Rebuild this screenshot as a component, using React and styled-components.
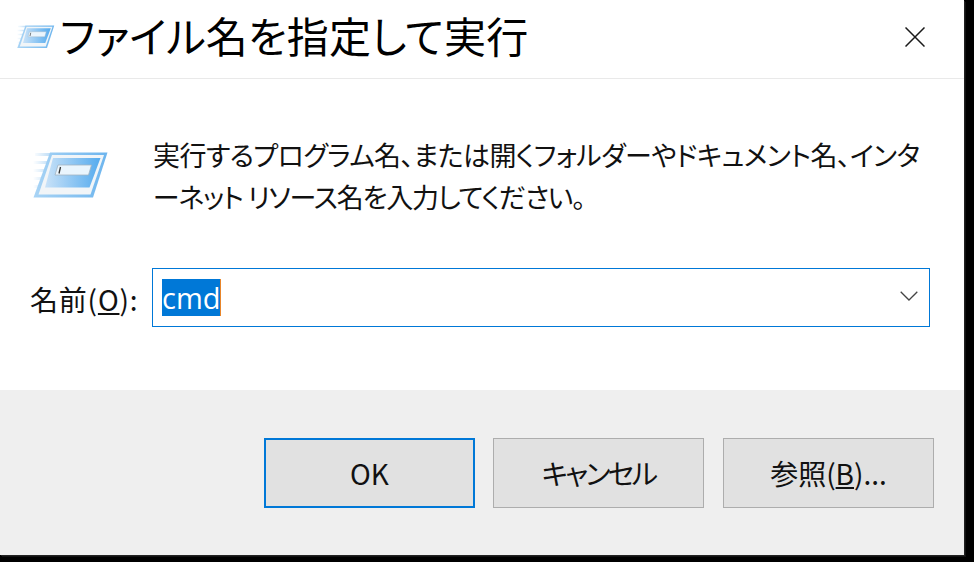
import React from "react";
import styled, { createGlobalStyle } from "styled-components";

const GlobalStyle = createGlobalStyle`
  html, body {
    margin: 0;
    padding: 0;
    background: #000;
  }
  body {
    width: 974px;
    height: 562px;
    overflow: hidden;
    font-family: "Noto Sans CJK JP", "Open Sans", sans-serif;
  }
`;

const RunIcon = ({ id, width, height }) => (
  <svg width={width} height={height} viewBox="0 0 76 47">
    <defs>
      <linearGradient id={`${id}-frame`} x1="0" x2="1" y1="0" y2="0">
        <stop offset="0" stopColor="#a9d4f5" />
        <stop offset="1" stopColor="#6db5ee" />
      </linearGradient>
      <linearGradient id={`${id}-inner`} x1="0" x2="1" y1="0" y2="0">
        <stop offset="0" stopColor="#c9e2f8" />
        <stop offset="1" stopColor="#55abee" />
      </linearGradient>
      <linearGradient id={`${id}-streak`} x1="0" x2="1" y1="0" y2="0">
        <stop offset="0" stopColor="#bcdcf6" stopOpacity="0" />
        <stop offset="1" stopColor="#bcdcf6" />
      </linearGradient>
    </defs>
    <path d="M2 1h16v3H2zM0 9h15v3H0zM0 17h13v3H0zM0 25h10v3H0zM0 33h7v3H0z" fill={`url(#${id}-streak)`} />
    <path d="M17 0.500H74.500L60 45.500H0.500z" fill={`url(#${id}-frame)`} />
    <path d="M19 3H71L57.500 42.500H5.500z" fill="#f1f5f8" />
    <path d="M20 6H67.500L56.500 35.500H12z" fill={`url(#${id}-inner)`} />
    <path d="M25 13H58.500L55.500 23H22z" fill="#eaf5fd" stroke="#a3b4c2" strokeWidth="0.800" />
    <path d="M27.500 15L26 21.500" stroke="#333" strokeWidth="1.300" />
  </svg>
);

const App = () => {
  return (
    <>
      <GlobalStyle />
      <Dialog>
        <TitleBar>
          <TitleIcon>
            <RunIcon id="small" width={38} height={24} />
          </TitleIcon>
          <Title>ファイル名を指定して実行</Title>
          <CloseButton>
            <svg width="20" height="20" viewBox="0 0 20 20">
              <path d="M0.500 0.500L19.500 19.500M19.500 0.500L0.500 19.500" stroke="#1a1a1a" strokeWidth="1.500" fill="none" />
            </svg>
          </CloseButton>
        </TitleBar>
        <Body>
          <Intro>
            <BigIcon>
              <RunIcon id="big" width={76} height={47} />
            </BigIcon>
            <Description>
              <DescriptionLine $spacing="-0.56px">
                実行するプログラム名、または開くフォルダーやドキュメント名、インタ
              </DescriptionLine>
              <DescriptionLine $spacing="-1.2px">
                ーネット リソース名を入力してください。
              </DescriptionLine>
            </Description>
          </Intro>
          <InputRow>
            <InputLabel>
              名前(<u>O</u>):
            </InputLabel>
            <Combo>
              <Selected>cmd</Selected>
              <Caret />
              <Chevron>
                <svg width="18" height="10" viewBox="0 0 18 10">
                  <path d="M0.700 0.700L9 9L17.300 0.700" stroke="#444" strokeWidth="1.300" fill="none" />
                </svg>
              </Chevron>
            </Combo>
          </InputRow>
        </Body>
        <Footer>
          <ActionButton $primary>OK</ActionButton>
          <ActionButton $spacing="-2.6px">キャンセル</ActionButton>
          <ActionButton>
            参照(<u>B</u>)...
          </ActionButton>
        </Footer>
      </Dialog>
    </>
  );
};

export default App;

const Dialog = styled.div`
  width: 964px;
  height: 555px;
  background: #fff;
  display: flex;
  flex-direction: column;
  box-shadow: 1px 1px 0 #222, 2px 2px 0 #111;
`;

const TitleBar = styled.div`
  height: 78px;
  box-sizing: content-box;
  border-bottom: 1px solid #e9e9e9;
  display: flex;
  align-items: center;
  padding-left: 17px;
  padding-right: 39px;
`;

const TitleIcon = styled.div`
  width: 38px;
  height: 24px;
  margin-right: 5px;
  margin-bottom: 4px;
`;

const Title = styled.div`
  flex: 1;
  font-size: 42px;
  line-height: 78px;
  margin-top: -8px;
  letter-spacing: 0.1px;
  color: #000;
  white-space: nowrap;
  font-feature-settings: "palt";
`;

const CloseButton = styled.div`
  width: 20px;
  height: 20px;
  display: flex;
  margin-bottom: 4px;
`;

const Body = styled.div`
  flex: 1;
  display: flex;
  flex-direction: column;
`;

const Intro = styled.div`
  display: flex;
  padding: 54px 0 0 33px;
  height: 135px;
  box-sizing: content-box;
`;

const BigIcon = styled.div`
  width: 76px;
  height: 47px;
  margin-top: 19px;
  margin-right: 44px;
`;

const Description = styled.div`
  font-size: 27px;
  line-height: 42px;
  padding-top: 1px;
  color: #111;
  white-space: nowrap;
  font-feature-settings: "palt";
`;

const DescriptionLine = styled.div`
  letter-spacing: ${props => props.$spacing};
`;

const InputRow = styled.div`
  display: flex;
  align-items: flex-start;
  height: 59px;
  padding-left: 30px;
`;

const InputLabel = styled.div`
  width: 122px;
  font-size: 28px;
  line-height: 59px;
  padding-top: 2px;
  color: #111;
  white-space: nowrap;
  letter-spacing: 0.8px;
`;

const Combo = styled.div`
  width: 778px;
  height: 59px;
  box-sizing: border-box;
  border: 1px solid #0078d7;
  display: flex;
  align-items: center;
  padding-left: 9px;
  padding-right: 11px;
`;

const Selected = styled.span`
  background: #0078d7;
  color: #fff;
  font-family: "Open Sans", sans-serif;
  font-size: 29px;
  line-height: 37px;
  height: 37px;
`;

const Caret = styled.span`
  width: 1px;
  height: 37px;
  background: #e8852a;
`;

const Chevron = styled.div`
  margin-left: auto;
  display: flex;
  margin-top: -3px;
`;

const Footer = styled.div`
  height: 165px;
  background: #efefef;
  display: flex;
  align-items: flex-start;
  padding: 48px 0 0 264px;
  box-sizing: border-box;
  gap: 18px;
`;

const ActionButton = styled.div`
  width: 211px;
  height: 70px;
  box-sizing: border-box;
  background: #e1e1e1;
  border: ${props => (props.$primary ? "2px solid #0078d7" : "1px solid #adadad")};
  display: flex;
  align-items: center;
  justify-content: center;
  font-size: 28px;
  letter-spacing: ${props => props.$spacing || "normal"};
  color: #111;
  white-space: pre;
  font-feature-settings: "palt";

  &:last-child {
    margin-left: 1px;
  }
`;
